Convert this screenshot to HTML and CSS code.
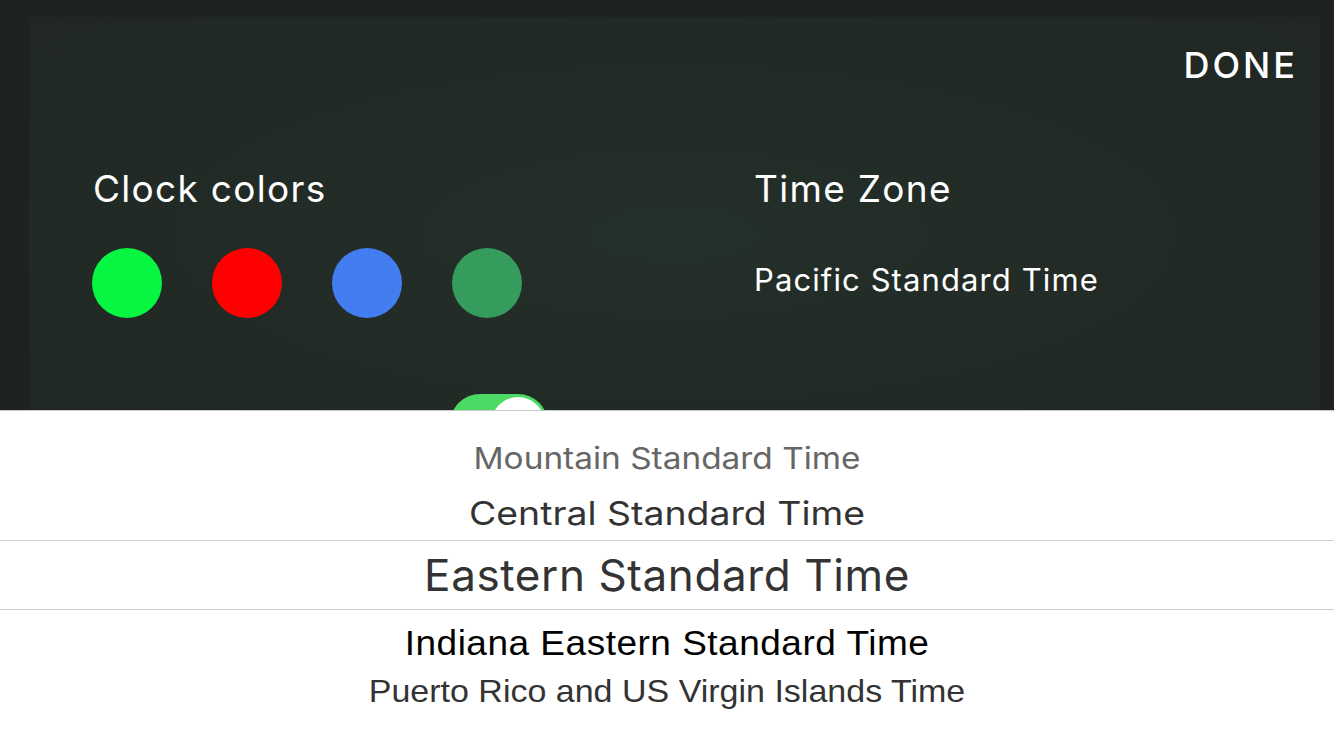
FILE: index.html
```html
<!DOCTYPE html>
<html>
<head>
<meta charset="utf-8">
<link rel="stylesheet" href="styles.css">
</head>
<body>
<div class="screen">
  <section class="settings">
    <div class="panel">
      <div class="header">
        <span class="done">DONE</span>
      </div>
      <div class="columns">
        <div class="col col-left">
          <div class="title">Clock colors</div>
          <div class="swatches">
            <span class="swatch green"></span>
            <span class="swatch red"></span>
            <span class="swatch blue"></span>
            <span class="swatch forest"></span>
          </div>
          <div class="toggle-row">
            <span class="toggle"><span class="knob"></span></span>
          </div>
        </div>
        <div class="col col-right">
          <div class="title">Time Zone</div>
          <div class="zone">Pacific Standard Time</div>
        </div>
      </div>
    </div>
  </section>
  <section class="picker">
    <div class="row r1"><span class="label">Mountain Standard Time</span></div>
    <div class="row r2"><span class="label">Central Standard Time</span></div>
    <div class="row selected"><span class="label">Eastern Standard Time</span></div>
    <div class="row r4"><span class="label">Indiana Eastern Standard Time</span></div>
    <div class="row r5"><span class="label">Puerto Rico and US Virgin Islands Time</span></div>
  </section>
</div>
</body>
</html>
```

FILE: styles.css
```css
html, body {
  margin: 0;
  padding: 0;
}
body {
  width: 1334px;
  height: 750px;
  overflow: hidden;
  font-family: "Inter", "Roboto", sans-serif;
}
.screen {
  display: flex;
  flex-direction: column;
  height: 750px;
}
.settings {
  height: 410px;
  flex: none;
  background: #1e2220;
  overflow: hidden;
  display: flex;
}
.panel {
  flex: 1;
  margin: 17px 14px 0 29px;
  background: radial-gradient(ellipse at 50% 55%, #24302a 0%, #222a25 55%, #212824 100%);
  display: flex;
  flex-direction: column;
}
.header {
  display: flex;
  justify-content: flex-end;
  padding: 26px 22px 0 0;
  height: 51px;
}
.done {
  color: #fff;
  font-size: 36px;
  font-weight: 500;
  letter-spacing: 3px;
  line-height: 44px;
}
.columns {
  display: flex;
  padding-left: 64px;
  padding-top: 80px;
}
.col-left {
  width: 661px;
}
.title {
  color: #fff;
  font-size: 37px;
  letter-spacing: 1.3px;
  line-height: 44px;
  font-weight: 400;
}
.swatches {
  display: flex;
  gap: 50px;
  margin-top: 37px;
  margin-left: -1px;
}
.swatch {
  width: 70px;
  height: 70px;
  border-radius: 50%;
  display: block;
}
.green { background: #07f641; }
.red { background: #ff0000; }
.blue { background: #437ef1; }
.forest { background: #359c5e; }
.toggle-row {
  margin-top: 76px;
  padding-left: 357px;
}
.toggle {
  display: block;
  width: 98px;
  height: 60px;
  border-radius: 30px;
  background: #4cd964;
  position: relative;
}
.knob {
  position: absolute;
  right: 3px;
  top: 3px;
  width: 54px;
  height: 54px;
  border-radius: 50%;
  background: #fff;
}
.zone {
  color: #fff;
  font-size: 31px;
  letter-spacing: 1.1px;
  line-height: 40px;
  margin-top: 49px;
}
.picker {
  flex: 1;
  background: #fff;
  border-top: 1px solid #c8c8c8;
  display: flex;
  flex-direction: column;
  align-items: center;
  padding-top: 26px;
}
.row {
  text-align: center;
  white-space: nowrap;
}
.label {
  display: inline-block;
}
.r1 {
  color: #666;
  font-size: 33.4px;
  line-height: 42px;
  height: 42px;
}
.r1 .label { transform: scaleY(0.9); }
.r2 {
  color: #333;
  font-size: 37.4px;
  padding-top: 8px;
  line-height: 53px;
  height: 53px;
}
.r2 .label { transform: scaleY(0.87); }
.selected {
  align-self: stretch;
  border-top: 1px solid #cfcfcf;
  border-bottom: 1px solid #cfcfcf;
  color: #333;
  font-size: 44px;
  letter-spacing: 0.6px;
  line-height: 68px;
  height: 68px;
}
.r4 {
  font-family: "Liberation Sans", Arial, sans-serif;
  color: #000;
  font-size: 37px;
  letter-spacing: 0.5px;
  line-height: 48px;
  height: 48px;
  margin-top: 9px;
}
.r4 .label { transform: scaleY(0.97); }
.r5 {
  font-family: "Liberation Sans", Arial, sans-serif;
  color: #333;
  font-size: 34px;
  line-height: 48px;
  height: 48px;
}
.r5 .label { transform: scaleY(0.9); }
```
